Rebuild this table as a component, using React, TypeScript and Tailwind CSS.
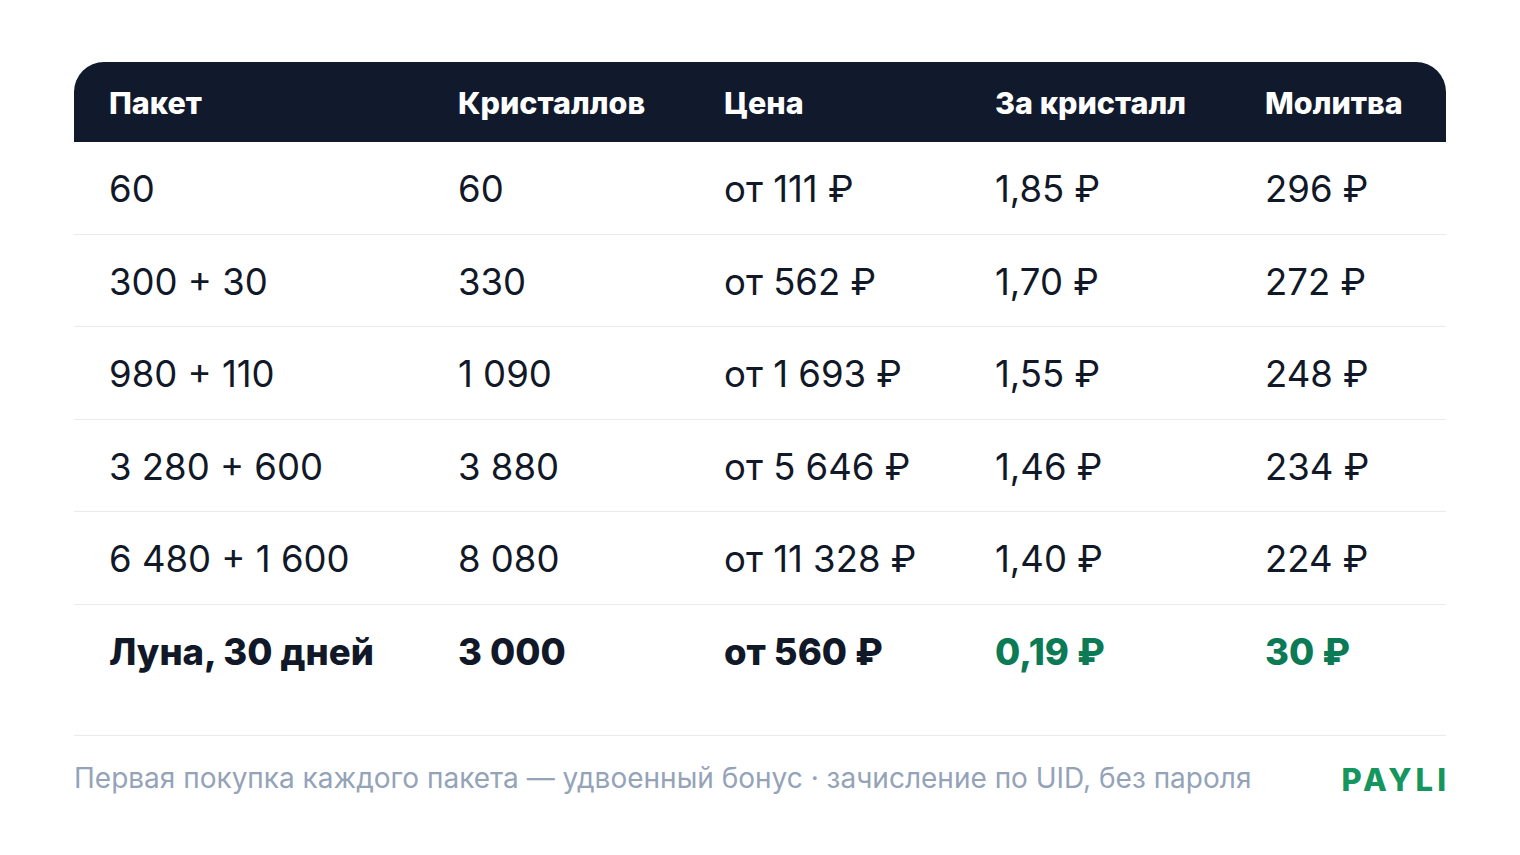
import React from 'react';

const rows = [
    { pack: '60', crystals: '60', price: 'от 111 ₽', per: '1,85 ₽', prayer: '296 ₽' },
    { pack: '300 + 30', crystals: '330', price: 'от 562 ₽', per: '1,70 ₽', prayer: '272 ₽' },
    { pack: '980 + 110', crystals: '1\u00A0090', price: 'от 1\u00A0693 ₽', per: '1,55 ₽', prayer: '248 ₽' },
    { pack: '3\u00A0280 + 600', crystals: '3\u00A0880', price: 'от 5\u00A0646 ₽', per: '1,46 ₽', prayer: '234 ₽' },
    { pack: '6\u00A0480 + 1\u00A0600', crystals: '8\u00A0080', price: 'от 11\u00A0328 ₽', per: '1,40 ₽', prayer: '224 ₽' },
];

const cols = 'grid grid-cols-[349px_266px_271px_270px_1fr] px-[35px] items-center';

const App: React.FC = () => {
    return (
        <div className="w-[1520px] h-[855px] bg-white px-[74px] pt-[62px] font-['Inter',sans-serif] text-[#111827]">
            <div className={`${cols} h-[80px] bg-[#111a2c] rounded-t-[30px] text-white text-[30.5px] font-extrabold`}>
                <div className="pt-[2px]">Пакет</div>
                <div className="pt-[2px]">Кристаллов</div>
                <div className="pt-[2px]">Цена</div>
                <div className="pt-[2px]">За кристалл</div>
                <div className="pt-[2px]">Молитва</div>
            </div>

            {rows.map((r, i) => (
                <div key={i} className={`${cols} h-[92.6px] border-b border-[#e8ebef] text-[36.5px] pt-[3px]`}>
                    <div>{r.pack}</div>
                    <div>{r.crystals}</div>
                    <div>{r.price}</div>
                    <div>{r.per}</div>
                    <div>{r.prayer}</div>
                </div>
            ))}

            <div className={`${cols} h-[93px] text-[36.5px] font-extrabold pt-[2px]`}>
                <div>Луна, 30 дней</div>
                <div>3{'\u00A0'}000</div>
                <div>от 560 ₽</div>
                <div className="text-[#0b7a55]">0,19 ₽</div>
                <div className="text-[#0b7a55]">30 ₽</div>
            </div>

            <div className="mt-[37px] border-t border-[#e8ebef] flex items-center justify-between h-[86px]">
                <p className="text-[28px] text-[#94a3b8]">
                    Первая покупка каждого пакета — удвоенный бонус · зачисление по UID, без пароля
                </p>
                <span className="text-[31px] font-extrabold tracking-[4px] -mr-[4px] pt-[4px] text-[#15965f]">PAYLI</span>
            </div>
        </div>
    );
};

export default App;
